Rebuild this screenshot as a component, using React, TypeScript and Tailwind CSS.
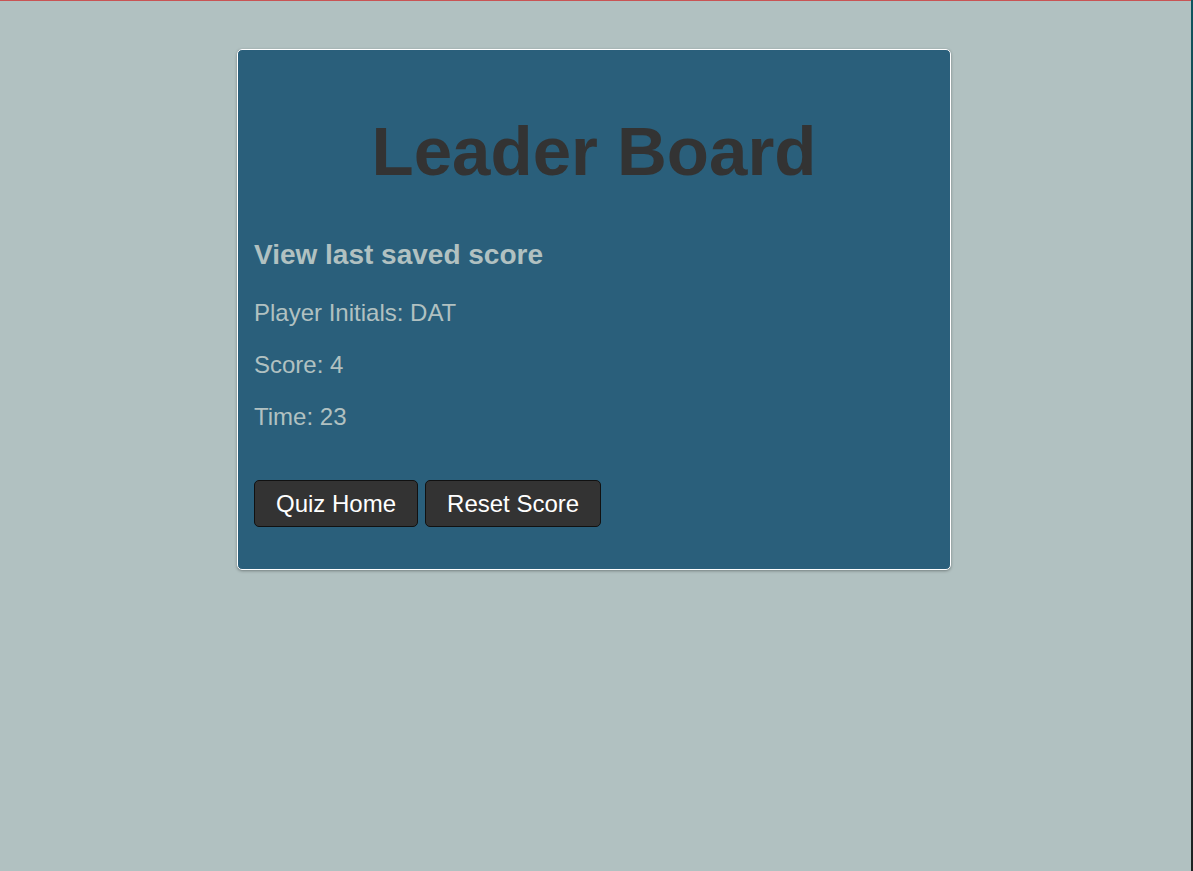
export default function App() {
  return (
    <div className="flex min-h-[871px] w-full bg-[#b1c1c1] font-['Liberation_Sans',Arial,sans-serif]">
      <div className="flex flex-1 flex-col">
        <div className="h-px w-full bg-[#c85454]" />
        <div className="pl-[237px] pt-[48px]">
          <div className="w-[714px] rounded-[5px] border border-white bg-[#2a5f7b] px-4 pb-[42px] shadow-[0_1px_3px_rgba(0,0,0,0.35)]">
            <h1 className="mt-[62px] text-center text-[69px] font-bold leading-[80px] text-[#333333]">
              Leader Board
            </h1>
            <h2 className="mt-[47px] text-[28px] font-bold leading-[32px] text-[#b1c1c1]">
              View last saved score
            </h2>
            <p className="mt-[28px] text-[24px] leading-[27px] text-[#b1c1c1]">Player Initials: DAT</p>
            <p className="mt-[25px] text-[24px] leading-[27px] text-[#b1c1c1]">Score: 4</p>
            <p className="mt-[25px] text-[24px] leading-[27px] text-[#b1c1c1]">Time: 23</p>
            <div className="mt-[50px] flex gap-[7px]">
              <button className="h-[47px] rounded-[5px] border border-[#111] bg-[#333333] px-[21px] text-[24px] leading-[27px] text-white">
                Quiz Home
              </button>
              <button className="h-[47px] rounded-[5px] border border-[#111] bg-[#333333] px-[21px] text-[24px] leading-[27px] text-white">
                Reset Score
              </button>
            </div>
          </div>
        </div>
      </div>
      <div className="w-[2px] bg-gradient-to-b from-[#0d5560] via-[#1f2a2b] to-[#1c2222]" />
    </div>
  );
}
